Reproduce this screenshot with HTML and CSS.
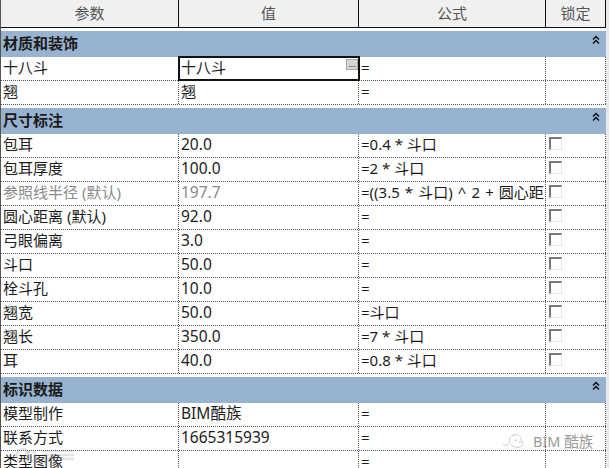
FILE: index.html
```html
<!DOCTYPE html>
<html lang="zh">
<head>
<meta charset="utf-8">
<title>参数</title>
<link rel="stylesheet" href="styles.css">
</head>
<body>
<div class="sheet">
  <div class="row head"><div>参数</div><div>值</div><div>公式</div><div>锁定</div></div>

  <section class="group">
    <div class="bar"><span>材质和装饰</span><svg class="fold" viewBox="0 0 8 10"><path d="M1 4.5 4 1.5 7 4.500M1 8.500 4 5.500 7 8.500"/></svg></div>
    <div class="row"><div>十八斗</div><div class="active">十八斗<span class="more">...</span></div><div>=</div><div></div></div>
    <div class="row"><div>翘</div><div>翘</div><div>=</div><div></div></div>
  </section>

  <section class="group">
    <div class="bar"><span>尺寸标注</span><svg class="fold" viewBox="0 0 8 10"><path d="M1 4.5 4 1.5 7 4.500M1 8.500 4 5.500 7 8.500"/></svg></div>
    <div class="row"><div>包耳</div><div class="num">20.0</div><div>=0.4 * 斗口</div><div><i class="check"></i></div></div>
    <div class="row"><div>包耳厚度</div><div class="num">100.0</div><div>=2 * 斗口</div><div><i class="check"></i></div></div>
    <div class="row muted"><div>参照线半径 (默认)</div><div class="num">197.7</div><div class="wide">=((3.5 * 斗口) ^ 2 + 圆心距</div><div><i class="check"></i></div></div>
    <div class="row"><div>圆心距离 (默认)</div><div class="num">92.0</div><div>=</div><div><i class="check"></i></div></div>
    <div class="row"><div>弓眼偏离</div><div class="num">3.0</div><div>=</div><div><i class="check"></i></div></div>
    <div class="row"><div>斗口</div><div class="num">50.0</div><div>=</div><div><i class="check"></i></div></div>
    <div class="row"><div>栓斗孔</div><div class="num">10.0</div><div>=</div><div><i class="check"></i></div></div>
    <div class="row"><div>翘宽</div><div class="num">50.0</div><div>=斗口</div><div><i class="check"></i></div></div>
    <div class="row"><div>翘长</div><div class="num">350.0</div><div>=7 * 斗口</div><div><i class="check"></i></div></div>
    <div class="row"><div>耳</div><div class="num">40.0</div><div>=0.8 * 斗口</div><div><i class="check"></i></div></div>
  </section>

  <section class="group">
    <div class="bar"><span>标识数据</span><svg class="fold" viewBox="0 0 8 10"><path d="M1 4.5 4 1.5 7 4.500M1 8.500 4 5.500 7 8.500"/></svg></div>
    <div class="row"><div>模型制作</div><div class="num">BIM酷族</div><div>=</div><div></div></div>
    <div class="row"><div>联系方式</div><div class="num">1665315939</div><div>=</div><div></div></div>
    <div class="row"><div>类型图像</div><div></div><div>=</div><div></div></div>
  </section>
</div>

<svg class="mark-left" viewBox="0 0 66 16"><circle cx="9" cy="8" r="6"/><circle cx="17" cy="9" r="5"/><path d="M28 4h32M28 8h32M28 12h32"/></svg>
<div class="mark-right">
  <svg class="wechat" viewBox="0 0 30 20"><path d="M2 14c3 2 5 1 7-1M10 12c-1-4 1-8 5-9 4-1 7 1 8 4M13 4l3-2M22 8c3 1 4 4 2 7-1 2-4 3-7 2-2 0-4-1-6-3"/><circle cx="17" cy="9" r="1"/><circle cx="22" cy="11" r="1"/></svg>
  <span>BIM 酷族</span>
</div>
</body>
</html>
```
FILE: styles.css
```css
* { box-sizing: border-box; }
html, body { margin: 0; height: 468px; overflow: hidden; background: #fff; }
body {
  position: relative;
  font: 15px/21px "Noto Sans", "Noto Sans CJK SC", sans-serif;
  color: #1c1c1c;
}
.sheet {
  width: 609px;
  border-left: 1px solid #555;
  border-right: 3px solid #e8e8e8;
  min-height: 468px;
}
.row {
  display: grid;
  grid-template-columns: 178px 180px 187px 60px;
  height: 24px;
  border-bottom: 1px dotted #555;
}
.row > div {
  position: relative;
  min-width: 0;
  padding-left: 2px;
  overflow: hidden;
  white-space: nowrap;
  border-right: 1px dotted #555;
}
.num { font-size: 15.5px; }
.wide { word-spacing: 1.2px; }
.head {
  height: 28px;
  border-bottom: 1px solid #111;
  background: #f0f0f0;
  color: #555;
}
.head > div {
  padding: 0;
  line-height: 26px;
  text-align: center;
  border-right: 1px solid #111;
}
.group { margin-top: 3px; }
.bar {
  display: flex;
  align-items: center;
  justify-content: space-between;
  height: 26px;
  padding: 0 6px 2px 2px;
  background: #98b3d0;
  font-weight: 700;
  color: #1a1a1a;
}
.fold {
  width: 8px;
  height: 10px;
  margin-top: -6px;
  fill: none;
  stroke: #111;
  stroke-width: 1.5;
}
.active.active {
  outline: 2px solid #111;
  outline-offset: -1px;
  z-index: 1;
  overflow: visible;
  border-right: 0;
}
.more {
  position: absolute;
  top: 2px;
  right: 1px;
  width: 12px;
  height: 11px;
  background: #d6d6d6;
  border: 1px solid #aaa;
  font-size: 9px;
  line-height: 7px;
  text-align: center;
  color: #111;
}
.muted > div:nth-child(-n+2) { color: #8a8a8a; }
.check {
  display: block;
  width: 13px;
  height: 13px;
  margin: 3px 0 0 1px;
  border: 1px solid #e6e6e6;
  border-top: 2px solid #777;
  border-left: 2px solid #777;
}
.mark-left {
  position: absolute;
  left: 13px;
  top: 447px;
  width: 68px;
  height: 16px;
  fill: none;
  stroke: rgba(130, 130, 130, .22);
  stroke-width: 2.5;
}
.mark-right {
  position: absolute;
  left: 501px;
  top: 431px;
  display: flex;
  align-items: center;
  gap: 6px;
  font-size: 14.5px;
  line-height: 20px;
  color: #9a9a9a;
}
.wechat {
  width: 26px;
  height: 18px;
  fill: none;
  stroke: #c4c4c4;
  stroke-width: 1;
}
.wechat circle { fill: #c4c4c4; stroke: none; }
```
